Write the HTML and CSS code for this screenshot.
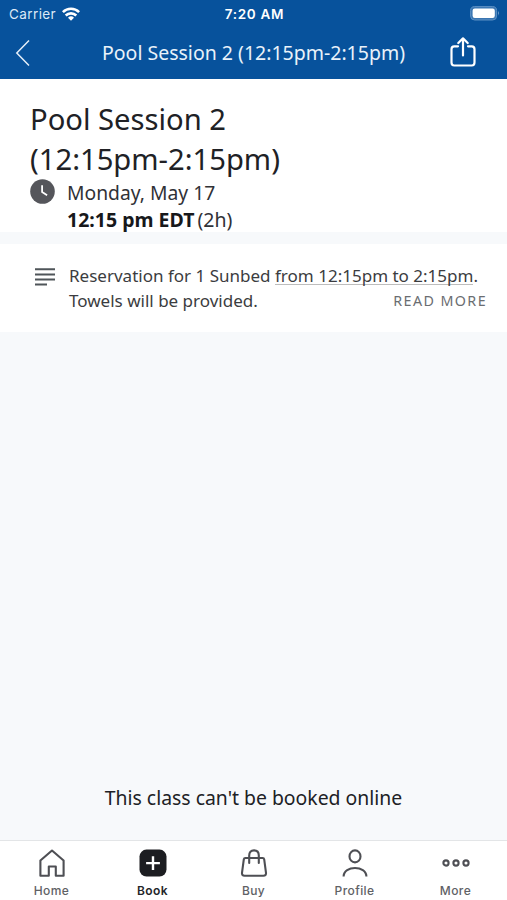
FILE: index.html
```html
<!DOCTYPE html>
<html lang="en">
<head>
<meta charset="utf-8">
<title>Pool Session 2</title>
<link rel="stylesheet" href="styles.css">
</head>
<body>
<div class="app">
  <header class="top">
    <div class="status">
      <div class="carrier"><span>Carrier</span>
        <svg class="wifi" width="18" height="14" viewBox="0 0 18 14" fill="none" stroke="#fff" stroke-width="2.6"><path d="M.9 5.1a11.6 11.6 0 0 1 16.2 0M3.7 8.5a7.6 7.6 0 0 1 10.6 0"/><path d="M9 13.8 6 10.8a4.3 4.3 0 0 1 6 0Z" fill="#fff" stroke="none"/></svg>
      </div>
      <div class="time">7:20 AM</div>
      <svg class="battery" width="30" height="15" viewBox="0 0 30 15"><rect x=".6" y=".6" width="26" height="13.4" rx="4" fill="#3a76b2" stroke="#5c90c4"/><rect x="2.6" y="2.6" width="22.2" height="9.4" rx="2.2" fill="#fff"/><path d="M28 4.8q1.8 2.5 0 5z" fill="#8fb2d6"/></svg>
    </div>
    <div class="nav">
      <svg class="back" width="16" height="28" viewBox="0 0 16 28" fill="none" stroke="#e4eef8" stroke-width="1.5"><path d="M14 1.5 1.8 14 14 26.5"/></svg>
      <h1 class="nav-title">Pool Session 2 (12:15pm-2:15pm)</h1>
      <svg class="share" width="26" height="30" viewBox="0 0 26 30" fill="none" stroke="#fff" stroke-width="2.2" stroke-linecap="round" stroke-linejoin="round"><path d="M8 9.3H4.2Q1.5 9.3 1.5 12.3V25.5Q1.5 28.5 4.2 28.5H21.8Q24.5 28.5 24.5 25.5V12.3Q24.5 9.3 21.8 9.3H18M13 18.5V1.5M8.3 6 13 1.3 17.7 6"/></svg>
    </div>
  </header>
  <section class="summary">
    <h2 class="title">Pool Session 2<br>(12:15pm-2:15pm)</h2>
    <div class="when">
      <svg class="clock" width="25" height="25" viewBox="0 0 25 25"><circle cx="12.5" cy="12.5" r="12.3" fill="#55565b"/><path d="M12.1 6.2V13l5 3.2" fill="none" stroke="#fff" stroke-width="1.8"/></svg>
      <div class="when-text"><div class="day">Monday, May 17</div><div class="hour"><b>12:15 pm EDT</b><span>(2h)</span></div></div>
    </div>
  </section>
  <section class="details">
    <svg class="lines" width="20" height="19" viewBox="0 0 20 19" stroke="#4f5559" stroke-width="2"><path d="M0 1.2H20M0 6.4H20M0 11.4H20M0 16.6H12"/></svg>
    <div class="desc">
      <p>Reservation for 1 Sunbed <span class="range">from 12:15pm to 2:15pm</span>.</p>
      <div class="second"><p>Towels will be provided.</p><span class="more">READ MORE</span></div>
    </div>
  </section>
  <main class="rest"><p class="notice">This class can't be booked online</p></main>
  <nav class="tabs">
    <div class="tab"><svg width="28" height="30" viewBox="0 0 28 30" fill="none" stroke="#4e4f54" stroke-width="2.1" stroke-linejoin="round"><path d="M2.4 12.5 14 2.5 25.6 12.5V27.8H17.8V18.5H10.8V27.8H2.4Z"/></svg><span>Home</span></div>
    <div class="tab active"><svg width="28" height="30" viewBox="0 0 28 30"><rect x=".5" y="1.6" width="27" height="27" rx="7" fill="#1c1d21"/><path d="M14 8.2V22M7.1 15.1H20.9" stroke="#fff" stroke-width="2.4"/></svg><span>Book</span></div>
    <div class="tab"><svg width="28" height="30" viewBox="0 0 28 30" fill="none" stroke="#4e4f54" stroke-width="2.1" stroke-linecap="round" stroke-linejoin="round"><path d="M5.4 10H22.6Q24 10 24.2 11.4L26 24.8Q26.3 27.8 23.4 27.8H4.6Q1.7 27.8 2 24.8L3.8 11.4Q4 10 5.4 10ZM9.2 15V7.4Q9.2 2.4 14 2.4T18.8 7.4V15"/></svg><span>Buy</span></div>
    <div class="tab"><svg width="28" height="30" viewBox="0 0 28 30" fill="none" stroke="#4e4f54" stroke-width="2.1"><ellipse cx="14" cy="8.4" rx="5.5" ry="6"/><path d="M2.6 28.6C2.6 17.2 25.4 17.2 25.4 28.6"/></svg><span>Profile</span></div>
    <div class="tab"><svg width="28" height="30" viewBox="0 0 28 30" fill="none" stroke="#4e4f54" stroke-width="2.1"><circle cx="4" cy="15" r="2.6"/><circle cx="14" cy="15" r="2.6"/><circle cx="24" cy="15" r="2.6"/></svg><span>More</span></div>
  </nav>
</div>
</body>
</html>
```
FILE: styles.css
```css
* { box-sizing: border-box; }
body, h1, h2, p { margin: 0; font-weight: 400; }
body { font-family: "Noto Sans", sans-serif; color: #202125; background: #f7f9fb; }
svg { display: block; flex: none; }
.app { width: 507px; height: 900px; display: flex; flex-direction: column; overflow: hidden; }
.top { height: 79px; background: #07529c; color: #fff; flex: none; }
.status { height: 27px; display: grid; grid-template-columns: 1fr auto 1fr; align-items: center; padding: 0 7px 0 9px; font-family: Inter, sans-serif; }
.carrier { display: flex; align-items: center; gap: 6px; font-size: 13.5px; letter-spacing: .4px; color: #dce9f6; }
.time { font-size: 13.5px; font-weight: 600; letter-spacing: .7px; }
.battery { justify-self: end; }
.nav { height: 52px; display: grid; grid-template-columns: 72px 1fr 72px; align-items: center; }
.back { margin-left: 15px; }
.nav-title { text-align: center; font-size: 19.5px; line-height: 28px; white-space: nowrap; color: #e9f2fa; }
.share { margin: 0 0 2px 15px; }
.summary { height: 153px; padding: 20px 30px 0; background: #fff; flex: none; }
.title { font-size: 29.2px; line-height: 40px; }
.when { display: flex; gap: 12px; font-size: 19.5px; line-height: 27px; }
.when-text { color: #303136; }
.day { font-size: 19.3px; }
.hour { display: flex; gap: 3px; }
.hour b { color: #17181b; }
.details { height: 88px; margin-top: 12px; padding: 19px 20px 0 35px; display: flex; gap: 14px; background: #fff; flex: none; }
.lines { margin-top: 5px; }
.desc { flex: 1; font-size: 17.03px; line-height: 25px; color: #3b3c40; white-space: nowrap; }
.range { background: linear-gradient(#bdbdbd, #bdbdbd) 0 20px / 100% 1px no-repeat; }
.second { display: flex; justify-content: space-between; line-height: 25px; }
.more { font-size: 14.3px; line-height: 26px; letter-spacing: 1.4px; color: #6a6d71; }
.rest { flex: 1; display: flex; flex-direction: column; justify-content: flex-end; align-items: center; padding-bottom: 28px; }
.notice { font-size: 19.4px; line-height: 28px; }
.tabs { height: 60px; padding: 7px 0 0 1px; display: grid; grid-template-columns: repeat(5, 101px); justify-content: start; background: #fff; border-top: 1px solid #e3e5e7; flex: none; }
.tab { display: flex; flex-direction: column; align-items: center; font-family: Inter, sans-serif; font-size: 12px; line-height: 16px; font-weight: 500; letter-spacing: .4px; color: #606165; gap: 5px; }
.active { color: #242529; font-weight: 600; }
```
